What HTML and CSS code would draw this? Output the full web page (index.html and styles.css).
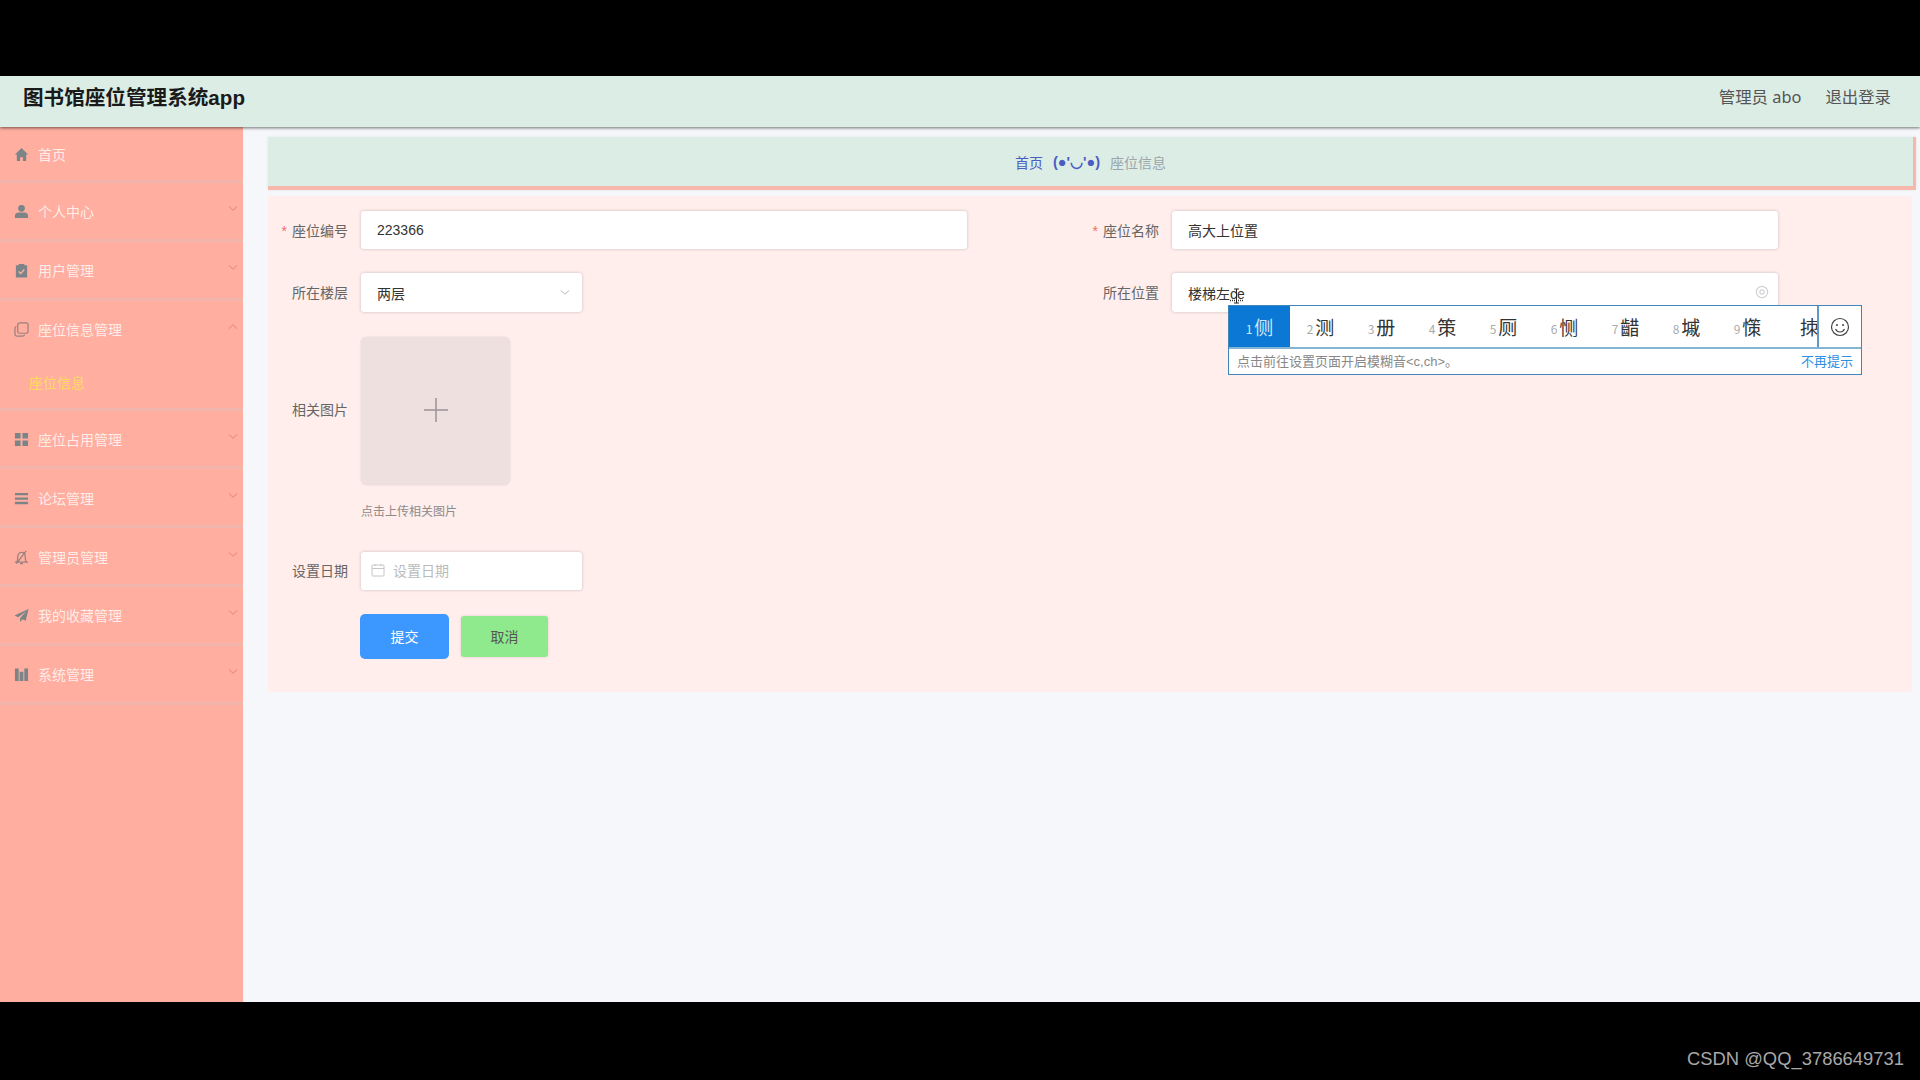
FILE: index.html
```html
<!DOCTYPE html>
<html lang="zh">
<head>
<meta charset="utf-8">
<title>图书馆座位管理系统app</title>
<link rel="stylesheet" href="styles.css">
</head>
<body>
<div class="band-top"></div>

<div class="topbar">
	<div class="app-title">图书馆座位管理系统app</div>
	<div class="user-links">
		<span>管理员 abo</span>
		<span>退出登录</span>
	</div>
</div>

<div class="layout">
	<ul class="sidebar">
		<li class="menu-item home">
			<svg class="menu-icon" viewBox="0 0 16 16"><path d="M8 1 1 8h2v7h3.500v-4h3v4H13V8h2z"/></svg>
			<span>首页</span>
		</li>
		<li class="menu-item">
			<svg class="menu-icon" viewBox="0 0 16 16"><circle cx="8" cy="4.600" r="3.600"/><path d="M1 15v-2.500C1 10 3 9 5 9h6c2 0 4 1 4 3.500V15z"/></svg>
			<span>个人中心</span>
			<svg class="chevron" viewBox="0 0 12 8"><path d="M1 1.500 6 6l5-4.500"/></svg>
		</li>
		<li class="menu-item">
			<svg class="menu-icon" viewBox="0 0 16 16"><path d="M2 2.500h3V1h6v1.500h3V15.500H2z"/><path class="tick" d="m5 9 2.200 2.200L11 7"/></svg>
			<span>用户管理</span>
			<svg class="chevron" viewBox="0 0 12 8"><path d="M1 1.500 6 6l5-4.500"/></svg>
		</li>
		<li class="menu-group">
			<div class="menu-item">
				<svg class="menu-icon outline" viewBox="0 0 16 16"><rect x="4" y="1" width="11" height="11" rx="2"/><path d="M2.500 4.500C1.500 5 1 5.700 1 7v6c0 1.200.8 2 2 2h6c1.300 0 2-.5 2.500-1.500"/></svg>
				<span>座位信息管理</span>
				<svg class="chevron" viewBox="0 0 12 8"><path d="M1 6.500 6 2l5 4.500"/></svg>
			</div>
			<div class="submenu-item">座位信息</div>
		</li>
		<li class="menu-item">
			<svg class="menu-icon" viewBox="0 0 16 16"><path d="M1 1h6v6H1zM9 1h6v6H9zM1 9h6v6H1zM9 9h6v6H9z"/></svg>
			<span>座位占用管理</span>
			<svg class="chevron" viewBox="0 0 12 8"><path d="M1 1.500 6 6l5-4.500"/></svg>
		</li>
		<li class="menu-item">
			<svg class="menu-icon" viewBox="0 0 16 16"><path d="M1 2h14v2.500H1zM1 6.800h14v2.500H1zM1 11.500h14V14H1z"/></svg>
			<span>论坛管理</span>
			<svg class="chevron" viewBox="0 0 12 8"><path d="M1 1.500 6 6l5-4.500"/></svg>
		</li>
		<li class="menu-item">
			<svg class="menu-icon outline" viewBox="0 0 16 16"><path d="M1 13h14M3 13c1-1.500 1-3 1-5.500C4 4.500 5.700 2.500 8 2.500s4 2 4 5c0 2.500 0 4 1 5.500M6.500 14.500h3M2.500 14.500 13 1"/></svg>
			<span>管理员管理</span>
			<svg class="chevron" viewBox="0 0 12 8"><path d="M1 1.500 6 6l5-4.500"/></svg>
		</li>
		<li class="menu-item">
			<svg class="menu-icon" viewBox="0 0 16 16"><path d="M15.500 1 .5 8l4 1.800L13 3.500 6.500 11v4l2.600-3 3.400 1.500z"/></svg>
			<span>我的收藏管理</span>
			<svg class="chevron" viewBox="0 0 12 8"><path d="M1 1.500 6 6l5-4.500"/></svg>
		</li>
		<li class="menu-item">
			<svg class="menu-icon" viewBox="0 0 16 16"><path d="M1 1.500h4V15H1zM6 5h4v10H6zM11 1.500h4V15h-4z"/></svg>
			<span>系统管理</span>
			<svg class="chevron" viewBox="0 0 12 8"><path d="M1 1.500 6 6l5-4.500"/></svg>
		</li>
	</ul>

	<div class="main">
		<div class="breadcrumb">
			<span class="crumb-link">首页</span>
			<span class="crumb-sep">(●'◡'●)</span>
			<span class="crumb-now">座位信息</span>
		</div>

		<div class="form-card">
			<div class="form-row">
				<div class="form-col">
					<label class="form-label"><i>*</i>座位编号</label>
					<div class="input wide">223366</div>
				</div>
				<div class="form-col">
					<label class="form-label"><i>*</i>座位名称</label>
					<div class="input wide">高大上位置</div>
				</div>
			</div>

			<div class="form-row">
				<div class="form-col">
					<label class="form-label">所在楼层</label>
					<div class="input short select">
						<span>两层</span>
						<svg class="select-arrow" viewBox="0 0 12 8"><path d="M1 1.500 6 6l5-4.500"/></svg>
					</div>
				</div>
				<div class="form-col">
					<label class="form-label">所在位置</label>
					<div class="input wide typing">
						<span>楼梯左<u>ce</u></span>
						<svg class="clear-icon" viewBox="0 0 16 16"><circle cx="8" cy="8" r="6.500"/><circle cx="8" cy="8" r="2.500"/></svg>
						<svg class="text-cursor" viewBox="0 0 9 16"><path d="M2 1h5M4.500 1v14M2 15h5"/></svg>
						<div class="ime">
							<div class="ime-top">
								<div class="ime-list">
									<span class="cand active"><b>1</b>侧</span>
									<span class="cand"><b>2</b>测</span>
									<span class="cand"><b>3</b>册</span>
									<span class="cand"><b>4</b>策</span>
									<span class="cand"><b>5</b>厕</span>
									<span class="cand"><b>6</b>恻</span>
									<span class="cand"><b>7</b>齰</span>
									<span class="cand"><b>8</b>墄</span>
									<span class="cand"><b>9</b>憡</span>
									<span class="cand"><b></b>拺</span>
								</div>
								<div class="ime-emoji">
									<svg viewBox="0 0 20 20"><circle cx="10" cy="10" r="8.500"/><circle class="eye" cx="7" cy="8" r="1"/><circle class="eye" cx="13" cy="8" r="1"/><path d="M5.500 12c1 2 2.700 3 4.500 3s3.500-1 4.500-3"/></svg>
								</div>
							</div>
							<div class="ime-tip">
								<span>点击前往设置页面开启模糊音&lt;c,ch&gt;。</span>
								<a>不再提示</a>
							</div>
						</div>
					</div>
				</div>
			</div>

			<div class="form-row upload-row">
				<div class="form-col">
					<label class="form-label">相关图片</label>
					<div class="upload-wrap">
						<div class="upload-box">
							<svg viewBox="0 0 24 24"><path d="M12 0v24M0 12h24"/></svg>
						</div>
						<div class="upload-tip">点击上传相关图片</div>
					</div>
				</div>
			</div>

			<div class="form-row date-row">
				<div class="form-col">
					<label class="form-label">设置日期</label>
					<div class="input short date">
						<svg class="date-icon" viewBox="0 0 14 14"><rect x="1" y="2" width="12" height="11" rx="1"/><path d="M1 5.500h12M4 1v2M10 1v2"/></svg>
						<span>设置日期</span>
					</div>
				</div>
			</div>

			<div class="form-actions">
				<button class="btn btn-submit">提交</button>
				<button class="btn btn-cancel">取消</button>
			</div>
		</div>
	</div>
</div>

<div class="band-bottom">CSDN @QQ_3786649731</div>
</body>
</html>
```

FILE: styles.css
```css
*{ margin:0; padding:0; box-sizing:border-box;}
html,body{ width:1920px; height:1080px; overflow:hidden;}
body{ display:flex; flex-direction:column; background:#000; font-family:"Liberation Sans","Noto Sans CJK SC",sans-serif; font-size:14px; color:#555;}
ul{ list-style:none;}

.band-top{ height:76px; background:#000;}
.band-bottom{ height:78px; background:#000; color:#a8a8a8; font-size:18.400px; text-align:right; padding:45px 16px 0 0; line-height:24px;}

.topbar{ height:51px; background:#dcede5; display:flex; justify-content:space-between; align-items:center; padding:0 29px 0 23px; box-shadow:0 1px 3px rgba(0,0,0,.55); position:relative; z-index:2;}
.app-title{ font-size:20.600px; font-weight:bold; color:#1a1a1a; margin-top:-11px;}
.user-links{ display:flex; gap:24px; font-size:16.400px; color:#555; margin-top:-12px; font-family:"Noto Sans","Noto Sans CJK SC",sans-serif;}

.layout{ height:875px; display:flex; background:#f6f7fa;}

.sidebar{ width:243px; background:#ffaea0; flex:none;}
.menu-item{ height:58.800px; display:flex; align-items:center; padding:0 5px 0 14px; color:rgba(255,255,255,.78); position:relative;}
.sidebar > .menu-item,.menu-group{ border-bottom:3px solid #f2b5ab;}
.sidebar > .home{ height:56px;}
.menu-item span{ margin:1px 0 0 9px; flex:1;}
.menu-icon{ width:15px; height:15px; fill:#7c8487; flex:none; margin-top:2px;}
.menu-icon .tick{ fill:none; stroke:#ffaea0; stroke-width:1.500;}
.menu-icon.outline{ fill:none; stroke:#96807f; stroke-width:1.300;}
.chevron{ width:10px; height:7px; fill:none; stroke:#f08f85; stroke-width:1.300; margin-top:-4px;}
.menu-group{ height:110px;}
.menu-group .menu-item{ height:56px;}
.submenu-item{ height:50px; line-height:52px; padding-left:29px; color:#ffdc5e;}

.main{ flex:1; padding:10px 4px 0 25px;}
.breadcrumb{ height:53px; background:#dcede5; border-bottom:4px solid #f7b8ab; border-right:3px solid #f7b8ab; display:flex; justify-content:center; align-items:center; gap:10px; box-shadow:0 0 3px rgba(0,0,0,.08);}
.crumb-link{ color:#4b5cc4;}
.crumb-sep{ color:#4b5cc4; font-weight:bold; font-size:14.500px;}
.crumb-now{ color:#9aa6ac;}

.form-card{ width:1644px; height:496px; margin-top:6px; background:#ffeeeb; padding-top:15px;}
.form-row{ display:flex; margin-bottom:24px;}
.form-col{ width:811px; display:flex; align-items:center;}
.form-label{ width:93px; padding-right:13px; text-align:right; color:#666; flex:none; margin-top:-1px;}
.form-label i{ color:#f56c6c; font-style:normal; margin-right:5px;}

.input{ height:38px; background:#fff; border-radius:3px; box-shadow:0 0 3px rgba(90,80,100,.35); display:flex; align-items:center; padding:0 16px; color:#333; position:relative;}
.input.wide{ width:606px;}
.input.short{ width:221px;}
.select{ justify-content:space-between; height:39px;}
.select-arrow{ width:10px; height:7px; fill:none; stroke:#b4b8bf; stroke-width:1.200; margin-right:-4px;}
.typing{ justify-content:space-between; height:39px;}
.typing u{ text-decoration:underline dotted;}
.clear-icon{ width:14px; height:14px; fill:none; stroke:#cfd2d6; stroke-width:1.300; margin:-2px -7px 0 0;}
.text-cursor{ position:absolute; left:60px; top:15px; width:9px; height:16px; fill:none; stroke:#222; stroke-width:1;}

.ime{ position:absolute; left:56px; top:32px; width:634px; height:70px; background:#fff; border:1px solid #3f86ba; z-index:3;}
.ime-top{ height:43px; display:flex; border-bottom:2px solid #84b4d4;}
.ime-list{ flex:1; display:flex; overflow:hidden;}
.cand{ width:61px; flex:none; display:flex; justify-content:center; align-items:center; gap:2px; font-size:19px; color:#333; font-family:"Noto Sans CJK SC",sans-serif; white-space:nowrap;}
.cand b{ font-size:12px; font-weight:normal; color:#aaa; margin-top:3px;}
.cand.active{ background:#0a78d4; color:#cfe6f8;}
.cand.active b{ color:#cfe6f8;}
.ime-emoji{ width:44px; flex:none; border-left:2px solid #5e9ac5; display:flex; justify-content:center; align-items:center;}
.ime-emoji svg{ width:20px; height:20px; fill:none; stroke:#444; stroke-width:1.200;}
.ime-emoji .eye{ fill:#444; stroke:none;}
.ime-tip{ height:23px; display:flex; justify-content:space-between; align-items:center; padding:0 8px; font-size:13px; color:#888;}
.ime-tip a{ color:#2f8fe0;}

.upload-row{ margin-bottom:0; margin-top:25px;}
.upload-row .form-col{ align-items:flex-start;}
.upload-row .form-label{ line-height:148px;}
.upload-box{ width:149px; height:148px; background:#efe0e0; border-radius:6px; box-shadow:0 0 2px rgba(90,80,100,.2); display:flex; justify-content:center; align-items:center;}
.upload-box svg{ width:24px; height:24px; fill:none; stroke:#9c9396; stroke-width:1.500; margin-top:-2px;}
.upload-tip{ font-size:12px; color:#8f8a8c; line-height:22px; margin-top:16px;}

.date-row{ margin-top:29px;}
.date-row .form-label{ margin-top:-3px;}
.date{ padding:0 16px 2px 10px; color:#bbb;}
.date-icon{ width:14px; height:14px; fill:none; stroke:#c4c6ca; stroke-width:1; margin-right:8px;}

.form-actions{ display:flex; align-items:center; gap:12px; padding-left:92px;}
.btn{ border:0; font-family:inherit; font-size:14px; border-radius:5px; padding-bottom:2px;}
.btn-submit{ width:89px; height:45px; background:#3c97fe; color:#fff;}
.btn-cancel{ width:87px; height:41px; background:#8eea8c; color:#555; border-radius:3px; box-shadow:0 0 3px rgba(90,80,100,.2);}
```
